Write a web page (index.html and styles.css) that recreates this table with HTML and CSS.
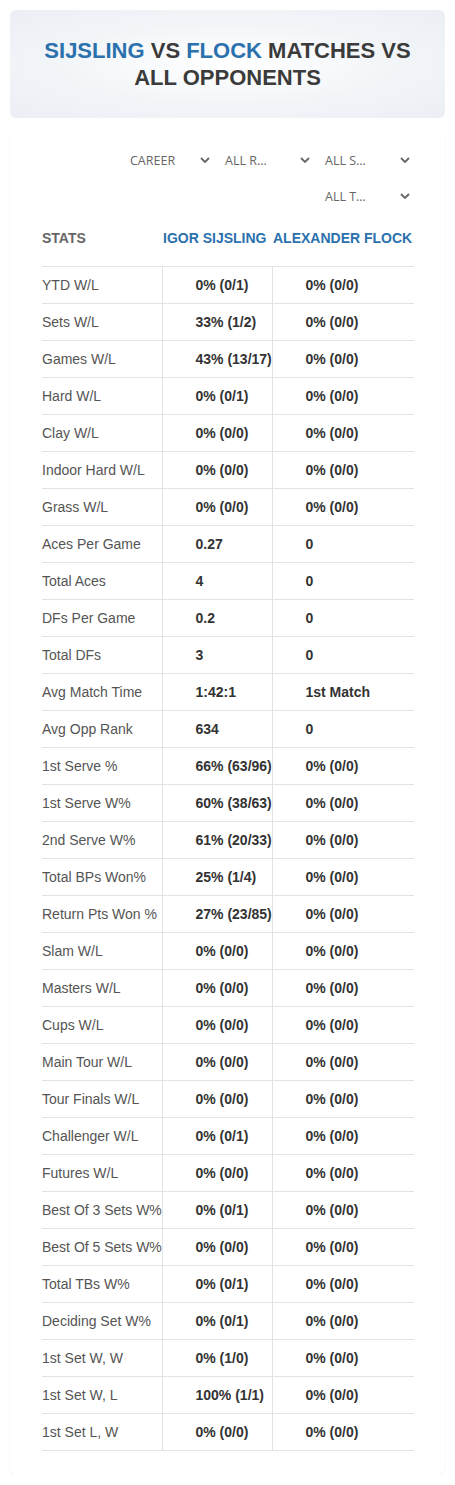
FILE: index.html
```html
<!DOCTYPE html>
<html>
<head>
<meta charset="utf-8">
<link rel="stylesheet" href="styles.css">
</head>
<body>
<div class="page">
  <div class="hero">
    <h1 class="title"><span class="blue">SIJSLING</span> VS <span class="blue">FLOCK</span> MATCHES VS<br>ALL OPPONENTS</h1>
  </div>
  <div class="card">
    <div class="filters">
      <div class="sel sel-first">CAREER<svg class="chev" viewBox="0 0 10 6"><path d="M1 1l4 4 4-4" fill="none" stroke="#666" stroke-width="1.8"/></svg></div>
      <div class="sel">ALL R…<svg class="chev" viewBox="0 0 10 6"><path d="M1 1l4 4 4-4" fill="none" stroke="#666" stroke-width="1.8"/></svg></div>
      <div class="sel">ALL S…<svg class="chev" viewBox="0 0 10 6"><path d="M1 1l4 4 4-4" fill="none" stroke="#666" stroke-width="1.8"/></svg></div>
      <div class="sel">ALL T…<svg class="chev" viewBox="0 0 10 6"><path d="M1 1l4 4 4-4" fill="none" stroke="#666" stroke-width="1.8"/></svg></div>
    </div>
    <table class="stats">
      <thead>
        <tr><th class="lbl">STATS</th><th class="p">IGOR SIJSLING</th><th class="p">ALEXANDER FLOCK</th></tr>
      </thead>
      <tbody>
        <tr><td>YTD W/L</td><td>0% (0/1)</td><td>0% (0/0)</td></tr>
        <tr><td>Sets W/L</td><td>33% (1/2)</td><td>0% (0/0)</td></tr>
        <tr><td>Games W/L</td><td>43% (13/17)</td><td>0% (0/0)</td></tr>
        <tr><td>Hard W/L</td><td>0% (0/1)</td><td>0% (0/0)</td></tr>
        <tr><td>Clay W/L</td><td>0% (0/0)</td><td>0% (0/0)</td></tr>
        <tr><td>Indoor Hard W/L</td><td>0% (0/0)</td><td>0% (0/0)</td></tr>
        <tr><td>Grass W/L</td><td>0% (0/0)</td><td>0% (0/0)</td></tr>
        <tr><td>Aces Per Game</td><td>0.27</td><td>0</td></tr>
        <tr><td>Total Aces</td><td>4</td><td>0</td></tr>
        <tr><td>DFs Per Game</td><td>0.2</td><td>0</td></tr>
        <tr><td>Total DFs</td><td>3</td><td>0</td></tr>
        <tr><td>Avg Match Time</td><td>1:42:1</td><td>1st Match</td></tr>
        <tr><td>Avg Opp Rank</td><td>634</td><td>0</td></tr>
        <tr><td>1st Serve %</td><td>66% (63/96)</td><td>0% (0/0)</td></tr>
        <tr><td>1st Serve W%</td><td>60% (38/63)</td><td>0% (0/0)</td></tr>
        <tr><td>2nd Serve W%</td><td>61% (20/33)</td><td>0% (0/0)</td></tr>
        <tr><td>Total BPs Won%</td><td>25% (1/4)</td><td>0% (0/0)</td></tr>
        <tr><td>Return Pts Won %</td><td>27% (23/85)</td><td>0% (0/0)</td></tr>
        <tr><td>Slam W/L</td><td>0% (0/0)</td><td>0% (0/0)</td></tr>
        <tr><td>Masters W/L</td><td>0% (0/0)</td><td>0% (0/0)</td></tr>
        <tr><td>Cups W/L</td><td>0% (0/0)</td><td>0% (0/0)</td></tr>
        <tr><td>Main Tour W/L</td><td>0% (0/0)</td><td>0% (0/0)</td></tr>
        <tr><td>Tour Finals W/L</td><td>0% (0/0)</td><td>0% (0/0)</td></tr>
        <tr><td>Challenger W/L</td><td>0% (0/1)</td><td>0% (0/0)</td></tr>
        <tr><td>Futures W/L</td><td>0% (0/0)</td><td>0% (0/0)</td></tr>
        <tr><td>Best Of 3 Sets W%</td><td>0% (0/1)</td><td>0% (0/0)</td></tr>
        <tr><td>Best Of 5 Sets W%</td><td>0% (0/0)</td><td>0% (0/0)</td></tr>
        <tr><td>Total TBs W%</td><td>0% (0/1)</td><td>0% (0/0)</td></tr>
        <tr><td>Deciding Set W%</td><td>0% (0/1)</td><td>0% (0/0)</td></tr>
        <tr><td>1st Set W, W</td><td>0% (1/0)</td><td>0% (0/0)</td></tr>
        <tr><td>1st Set W, L</td><td>100% (1/1)</td><td>0% (0/0)</td></tr>
        <tr><td>1st Set L, W</td><td>0% (0/0)</td><td>0% (0/0)</td></tr>
      </tbody>
    </table>
  </div>
</div>
</body>
</html>
```
FILE: styles.css
```css
html, body {
  margin: 0;
  padding: 0;
  background: #fff;
}
body {
  font-family: "Liberation Sans", Arial, sans-serif;
  color: #333;
}
.page {
  padding: 10px 10px 0 10px;
}
.hero {
  height: 108px;
  border-radius: 6px;
  background: radial-gradient(ellipse at center, #ffffff 0%, #f2f5f8 55%, #ebeff4 100%);
  display: flex;
  align-items: center;
  justify-content: center;
}
.title {
  margin: 0;
  font-size: 22px;
  line-height: 27px;
  font-weight: bold;
  text-align: center;
  color: #3b3b3b;
}
.blue {
  color: #2b71ad;
}
.card {
  margin-top: 10px;
  padding: 14px 32px 0 32px;
  border-radius: 6px;
  box-shadow: 0 1px 2px rgba(0,0,0,0.07);
  height: 1332px;
}
.filters {
  display: flex;
  flex-wrap: wrap;
  justify-content: flex-end;
  width: 378px;
}
.sel {
  width: 100px;
  height: 36px;
  box-sizing: border-box;
  display: flex;
  align-items: center;
  justify-content: space-between;
  padding: 0 0 0 5px;
  font-family: "Open Sans", "Noto Sans", sans-serif;
  font-size: 12.5px;
  color: #666;
}
.sel-first {
  width: 95px;
}
.chev {
  width: 10px;
  height: 6px;
  margin-right: 10px;
}
.stats {
  width: 370px;
  border-collapse: collapse;
  table-layout: fixed;
  margin-top: 2px;
}
.stats th {
  font-size: 14px;
  font-weight: bold;
  text-align: left;
  height: 44px;
  padding: 0 0 6px 0;
  white-space: nowrap;
  border-bottom: 1px solid #e1e4e6;
}
.stats th.lbl {
  color: #666;
  width: 120px;
}
.stats th.p {
  color: #2b71ad;
  width: 109px;
  padding-left: 1px;
}
.stats th.p:last-child {
  width: 141px;
}
.stats td {
  height: 36px;
  padding: 0;
  font-size: 14px;
  border-bottom: 1px solid #e1e4e6;
  white-space: nowrap;
}
.stats td:first-child {
  color: #555;
}
.stats td:nth-child(2),
.stats td:nth-child(3) {
  font-weight: bold;
  color: #333;
  padding-left: 33px;
  border-left: 1px solid #e1e4e6;
}
```
